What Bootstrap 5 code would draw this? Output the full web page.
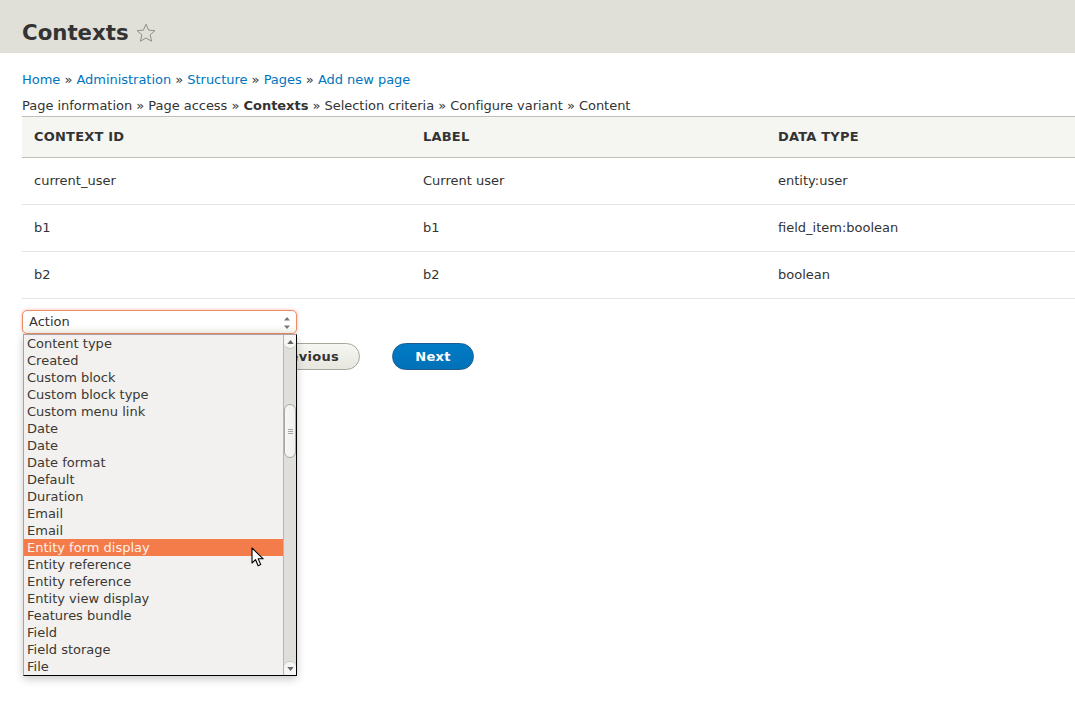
<!DOCTYPE html>
<html lang="en">
<head>
<meta charset="utf-8">
<title>Contexts</title>
<link rel="stylesheet" href="https://cdn.jsdelivr.net/npm/bootstrap@5.3.0/dist/css/bootstrap.min.css">
<style>
html,body{height:724px;overflow:hidden}
body{font-family:"DejaVu Sans",sans-serif;font-size:13px;line-height:17px;color:#333;background:#fff}
.head-band{background:#e0e0d8;height:53px;padding:20px 22px 0}
.page-title{font-size:21.3px;line-height:26px;font-weight:700;color:#333;margin:0}
.star-ic{width:20px;height:20px;margin-left:7px;margin-top:0}
.page-main{padding:0 0 0 22px}
.crumbs{padding-top:18px;height:51px;letter-spacing:-.03px}
.crumbs a,.crumbs a:hover{color:#0074bd;text-decoration:none}
.wizard-trail{height:12px;line-height:17px;margin-top:-7px;margin-bottom:7px;letter-spacing:-.03px}
.ctx-table{width:100%;margin:0;border-collapse:collapse;font-size:13px}
.ctx-table th{background:#f5f5f2;border-top:1px solid #bfbfba;border-bottom:1px solid #bfbfba;padding:0 12px 2px;height:41px;text-transform:uppercase;font-weight:700;letter-spacing:.2px;color:#333;box-shadow:none}
.ctx-table td{padding:0 12px 2px;height:47px;border-bottom:1px solid #e6e4df;color:#333;background:#fff;box-shadow:none}
.col-a{width:389px}.col-b{width:355px}
.form-zone{position:relative;height:400px}
.fake-select{position:absolute;left:0;top:11px;width:275px;height:24px;border:1px solid #ee8b66;border-radius:5px;background:linear-gradient(#fff 60%,#f2f1ec);box-shadow:0 0 2px 1px rgba(240,140,100,.35);padding:2px 6px;line-height:18px;color:#333}
.fake-select svg{position:absolute;right:5px;top:5px}
.btn-row{padding:44px 0 0 229px;gap:32px}
.pill{height:27px;border-radius:14px;font-size:13px;font-weight:700;line-height:24px;padding:0 21px;letter-spacing:.3px}
.pill-light{background:linear-gradient(#f6f6f3,#e7e7df);border:1px solid #a6a69c;color:#333;width:109px}
.pill-blue{background:linear-gradient(#007bc6,#0071b8);border:1px solid #1e5c90;color:#fff;width:82px}
.drop-menu{position:absolute;left:1px;top:35px;width:274px;height:342px;background:#f2f1ef;border:1px solid #000;border-left-color:#a5a5a5;border-top-color:#a5a5a5;box-shadow:0 3px 8px rgba(0,0,0,.22);z-index:5}
.opt-list{list-style:none;margin:0;padding:0 13px 0 0;position:absolute;left:0;top:0;right:0;bottom:0;overflow:hidden}
.opt-list li{height:17px;line-height:17px;padding-left:3px;color:#3c3832;white-space:nowrap}
.opt-list li.picked{background:#f47b4a;color:#fff0e8}
.scroll-rail{position:absolute;right:0;top:0;bottom:0;width:13px;background:#dfdedb;border-left:1px solid #b5b5b2}
.scroll-end{position:absolute;left:0;right:0;height:14px;background:#f5f5f3;display:flex;align-items:center;justify-content:center}
.scroll-top{top:0;border-radius:0 0 6px 6px;border-bottom:1px solid #c4c4c1}
.scroll-bot{bottom:0;border-radius:6px 6px 0 0;border-top:1px solid #c4c4c1}
.thumb-bar{position:absolute;left:0;right:0;top:69px;height:54px;background:linear-gradient(90deg,#f7f7f6,#efefed);border:1px solid #a9a9a6;border-radius:6px;display:flex;flex-direction:column;align-items:center;justify-content:center;gap:1px}
.thumb-bar i{display:block;width:5px;height:1px;background:#a5a5a2}
.arrow-ptr{position:absolute;left:227px;top:212px;z-index:6}
</style>
</head>
<body>
<header class="head-band">
  <div class="d-flex align-items-center">
    <h1 class="page-title">Contexts</h1>
    <svg class="star-ic" viewBox="0 0 20 20" fill="none" stroke="#8f8f86" stroke-width="1"><path d="M10 1.200l2.600 5.900 6.300.6-4.800 4.200 1.500 6.300L10 15l-5.600 3.200 1.500-6.300-4.800-4.200 6.300-.6z"/></svg>
  </div>
</header>
<main class="page-main">
  <nav class="crumbs"><a href="#">Home</a> » <a href="#">Administration</a> » <a href="#">Structure</a> » <a href="#">Pages</a> » <a href="#">Add new page</a></nav>
  <div class="wizard-trail">Page information » Page access » <b>Contexts</b> » Selection criteria » Configure variant » Content</div>
  <table class="ctx-table">
    <thead><tr><th class="col-a">Context ID</th><th class="col-b">Label</th><th>Data type</th></tr></thead>
    <tbody>
      <tr><td>current_user</td><td>Current user</td><td>entity:user</td></tr>
      <tr><td>b1</td><td>b1</td><td>field_item:boolean</td></tr>
      <tr><td>b2</td><td>b2</td><td>boolean</td></tr>
    </tbody>
  </table>
  <div class="form-zone">
    <div class="fake-select">Action
      <svg width="8" height="14" viewBox="0 0 8 14" fill="#777"><path d="M4 1l3 3.500H1zM4 13L1 9.500h6z"/></svg>
    </div>
    <div class="d-flex btn-row">
      <button type="button" class="btn pill pill-light">Previous</button>
      <button type="button" class="btn pill pill-blue">Next</button>
    </div>
    <div class="drop-menu">
      <ul class="opt-list">
        <li>Content type</li><li>Created</li><li>Custom block</li><li>Custom block type</li><li>Custom menu link</li><li>Date</li><li>Date</li><li>Date format</li><li>Default</li><li>Duration</li><li>Email</li><li>Email</li><li class="picked">Entity form display</li><li>Entity reference</li><li>Entity reference</li><li>Entity view display</li><li>Features bundle</li><li>Field</li><li>Field storage</li><li>File</li>
      </ul>
      <div class="scroll-rail">
        <div class="scroll-end scroll-top"><svg width="7" height="4" viewBox="0 0 8 5" fill="#666"><path d="M4 0l4 5H0z"/></svg></div>
        <div class="thumb-bar"><i></i><i></i><i></i></div>
        <div class="scroll-end scroll-bot"><svg width="7" height="4" viewBox="0 0 8 5" fill="#666"><path d="M4 5L0 0h8z"/></svg></div>
      </div>
      <svg class="arrow-ptr" width="14" height="21" viewBox="0 0 14 21"><path d="M1 1v15l3.600-3.300 2.500 6 2.600-1.100-2.500-5.800h5z" fill="#fff" stroke="#000" stroke-width="1.100" stroke-linejoin="round"/></svg>
    </div>
  </div>
</main>
<script src="https://cdn.jsdelivr.net/npm/bootstrap@5.3.0/dist/js/bootstrap.bundle.min.js"></script>
</body>
</html>
